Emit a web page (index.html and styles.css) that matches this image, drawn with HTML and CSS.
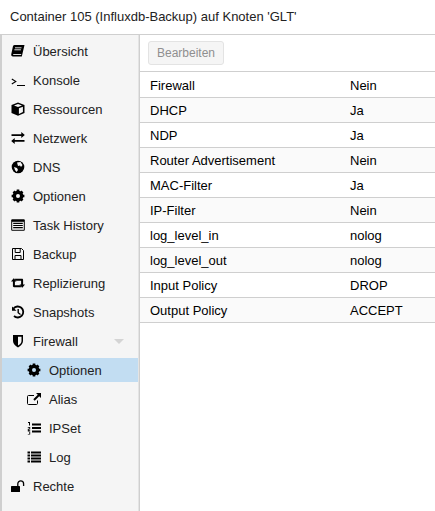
FILE: index.html

```html
<!DOCTYPE html>
<html lang="de">
<head>
<meta charset="UTF-8">
<title>Container 105</title>
<link rel="stylesheet" href="styles.css">
</head>
<body>

<div class="title">Container 105 (Influxdb-Backup) auf Knoten 'GLT'</div>

<div class="main">
  <div class="sidebar">
    <div class="item">
      <svg class="icon" viewBox="0 0 14 14"><path d="M3.500 1H13.500L10.800 12.500H2c-1.500 0-2-1.100-1.700-2.500L1.800 3C2 1.800 2.500 1 3.500 1z"/><path d="M4 3.800h6.500M3.400 5.800h6.500M2.200 10.500h8" stroke="#f5f5f5" stroke-width=".9" fill="none"/></svg>
      <span>Übersicht</span>
    </div>
    <div class="item">
      <svg class="icon" viewBox="0 0 14 14"><path d="M.8 6l4 2.500-4 2.500M6 12.500h8" fill="none" stroke="#000" stroke-width="1.100"/></svg>
      <span>Konsole</span>
    </div>
    <div class="item">
      <svg class="icon" viewBox="0 0 14 14"><path d="M7 .5l6.500 2.600v7.800L7 13.700.5 10.900V3.100z"/><path d="M3 3.400L7 1.900l4 1.500L7 5zM7.900 6.300l4-1.600v5.400l-4 1.900z" fill="#f5f5f5"/></svg>
      <span>Ressourcen</span>
    </div>
    <div class="item">
      <svg class="icon" viewBox="0 0 14 14"><path d="M.5 3.200H10.300V1l3.500 3-3.500 3V4.900H.5zM13.500 9.100H3.700V7L.2 10l3.500 3v-2.200h9.800z"/></svg>
      <span>Netzwerk</span>
    </div>
    <div class="item">
      <svg class="icon" viewBox="0 0 14 14"><circle cx="7" cy="7" r="6.300"/><path d="M6 2.500l3.500-.5 2 3-1.500 2-1-1.500-2 .5zM3 7l3 1 1 2-1.500 2L4 10z" fill="#f5f5f5"/></svg>
      <span>DNS</span>
    </div>
    <div class="item">
      <svg class="icon" viewBox="0 0 14 14"><circle cx="7" cy="7" r="3.800" fill="none" stroke="#000" stroke-width="3.200"/><path d="M7 .6v12.800M.6 7h12.800M2.500 2.500l9 9M11.500 2.500l-9 9" stroke="#000" stroke-width="2.600"/><circle cx="7" cy="7" r="2" fill="#f5f5f5"/></svg>
      <span>Optionen</span>
    </div>
    <div class="item">
      <svg class="icon" viewBox="0 0 14 14"><rect x=".2" y="1.200" width="13.600" height="11.600" rx="1"/><path d="M1.200 3.800h11.600v8H1.200z" fill="#f5f5f5"/><path d="M2.200 4.800h9.600V6H2.200zM2.200 6.900h9.600v1.200H2.200zM2.200 9h9.600v1.200H2.200z"/></svg>
      <span>Task History</span>
    </div>
    <div class="item">
      <svg class="icon" viewBox="0 0 14 14"><path d="M1.500 1.500h9l2 2v9h-11zM4.200 1.500v4h5v-4M4 12.500V8.500h6v4" fill="none" stroke="#000" stroke-width="1"/></svg>
      <span>Backup</span>
    </div>
    <div class="item">
      <svg class="icon" viewBox="0 0 14 14"><path d="M0 5.500l2.700-3.300 2.800 3.300H3.900V9.300H9l1.600 1.900H3c-.6 0-1.100-.5-1.100-1.100V5.500zM14 8.500l-2.700 3.300L8.500 8.500h1.600V4.700H5L3.400 2.800H11c.6 0 1.100.5 1.100 1.100v4.600z"/></svg>
      <span>Replizierung</span>
    </div>
    <div class="item">
      <svg class="icon" viewBox="0 0 14 14"><path d="M2.500 3.500A5.500 5.500 0 1 1 3 11" fill="none" stroke="#000" stroke-width="1.800"/><path d="M1 1.500l4.500 4.300H1zM6.500 4h1.400v3.500l2 1.500-.8 1L6.500 8z"/></svg>
      <span>Snapshots</span>
    </div>
    <div class="item">
      <svg class="icon" viewBox="0 0 14 14"><path d="M2 1h10v6c0 3-2.500 5-5 6.500C4.500 12 2 10 2 7z"/><path d="M7 2.700h3.500V7c0 2-1.800 3.500-3.500 4.600z" fill="#f5f5f5"/></svg>
      <span>Firewall</span>
      <span class="arrow"></span>
    </div>
    <div class="item sub selected">
      <svg class="icon" viewBox="0 0 14 14"><circle cx="7" cy="7" r="3.800" fill="none" stroke="#000" stroke-width="3.200"/><path d="M7 .6v12.800M.6 7h12.800M2.500 2.500l9 9M11.500 2.500l-9 9" stroke="#000" stroke-width="2.600"/><circle cx="7" cy="7" r="2" fill="#c2ddf2"/></svg>
      <span>Optionen</span>
    </div>
    <div class="item sub">
      <svg class="icon" viewBox="0 0 14 14"><path d="M10.500 8.500v3c0 .6-.4 1-1 1h-8c-.6 0-1-.4-1-1v-7c0-.6.4-1 1-1h5.500" fill="none" stroke="#000"/><path d="M9 1h5v5l-1.800-1.800-4.500 4.500-1.400-1.400 4.500-4.500z"/></svg>
      <span>Alias</span>
    </div>
    <div class="item sub">
      <svg class="icon" viewBox="0 0 14 14"><path d="M5 2.500h9v2H5zM5 6h9v2H5zM5 9.500h9v2H5z"/><path d="M1 1h2v3.500H2V2H1zM.8 6h2.400v.7H.8zM2.300 6.700h.9v1H2.300zM.8 7.700h2.400v.7H.8zM.8 8.400h.9v.9H.8zM.8 9.300h2.400v.6H.8zM.8 10.500h2.400v.6H.8zM2.300 11.100h.9v1.800H2.300zM.8 12.900h2.400v.6H.8z"/></svg>
      <span>IPSet</span>
    </div>
    <div class="item sub">
      <svg class="icon" viewBox="0 0 14 14"><path d="M.5 1.500h2.500v1.900H.5zM.5 4.500h2.500v1.900H.5zM.5 7.500h2.500v1.900H.5zM.5 10.500h2.500v1.900H.5zM4 1.500h10v1.900H4zM4 4.500h10v1.900H4zM4 7.500h10v1.900H4zM4 10.500h10v1.900H4z"/></svg>
      <span>Log</span>
    </div>
    <div class="item">
      <svg class="icon" viewBox="0 0 14 14"><rect x="0" y="7" width="9" height="6" rx=".6"/><path d="M6.800 7V4.800a2.900 2.900 0 0 1 5.800 0V7" fill="none" stroke="#000" stroke-width="1.300"/></svg>
      <span>Rechte</span>
    </div>
  </div>

  <div class="content">
    <div class="toolbar">
      <button class="btn" disabled>Bearbeiten</button>
    </div>
    <div class="row"><div class="key">Firewall</div><div>Nein</div></div>
    <div class="row odd"><div class="key">DHCP</div><div>Ja</div></div>
    <div class="row"><div class="key">NDP</div><div>Ja</div></div>
    <div class="row odd"><div class="key">Router Advertisement</div><div>Nein</div></div>
    <div class="row"><div class="key">MAC-Filter</div><div>Ja</div></div>
    <div class="row odd"><div class="key">IP-Filter</div><div>Nein</div></div>
    <div class="row"><div class="key">log_level_in</div><div>nolog</div></div>
    <div class="row odd"><div class="key">log_level_out</div><div>nolog</div></div>
    <div class="row"><div class="key">Input Policy</div><div>DROP</div></div>
    <div class="row odd"><div class="key">Output Policy</div><div>ACCEPT</div></div>
  </div>
</div>

</body>
</html>
```

FILE: styles.css

```css
html, body {
  height: 100%;
}

body {
  margin: 0;
  font-family: "Liberation Sans", Arial, sans-serif;
  font-size: 13px;
  color: #000;
  background-color: #fff;
  overflow: hidden;
}

.title {
  height: 34px;
  line-height: 34px;
  padding-left: 10px;
  font-size: 13px;
  color: #222;
  border-bottom: 1px solid #cfcfcf;
}

.main {
  display: flex;
  height: 476px;
}

.sidebar {
  width: 136px;
  padding-top: 4px;
  background-color: #f5f5f5;
  border-left: 2px solid #cfcfcf;
  border-right: 1px solid #e4e4e4;
  flex: none;
}

.item {
  display: flex;
  align-items: center;
  height: 24px;
  margin-bottom: 5px;
  padding-left: 9px;
  color: #222;
}

.item.sub {
  padding-left: 25px;
}

.item.selected {
  background-color: #c2ddf2;
}

.icon {
  width: 14px;
  height: 14px;
  margin-right: 8px;
  flex: none;
}

.arrow {
  margin-left: auto;
  margin-right: 14px;
  border-left: 5px solid transparent;
  border-right: 5px solid transparent;
  border-top: 5px solid #d4d4d4;
}

.content {
  flex: 1;
  border-left: 1px solid #cfcfcf;
}

.toolbar {
  height: 36px;
  margin-bottom: 1px;
  padding-left: 8px;
  display: flex;
  align-items: center;
  border-bottom: 1px solid #cfcfcf;
}

.btn {
  width: 76px;
  height: 24px;
  padding: 0;
  font-family: inherit;
  font-size: 12px;
  color: #8f8f8f;
  background-color: #f5f5f5;
  border: 1px solid #e3e3e3;
  border-radius: 3px;
}

.row {
  display: flex;
  height: 23px;
  padding-top: 1px;
  line-height: 24px;
  padding-left: 10px;
  border-bottom: 1px solid #cfcfcf;
}

.row.odd {
  background-color: #fafafa;
}

.key {
  width: 200px;
}
```
